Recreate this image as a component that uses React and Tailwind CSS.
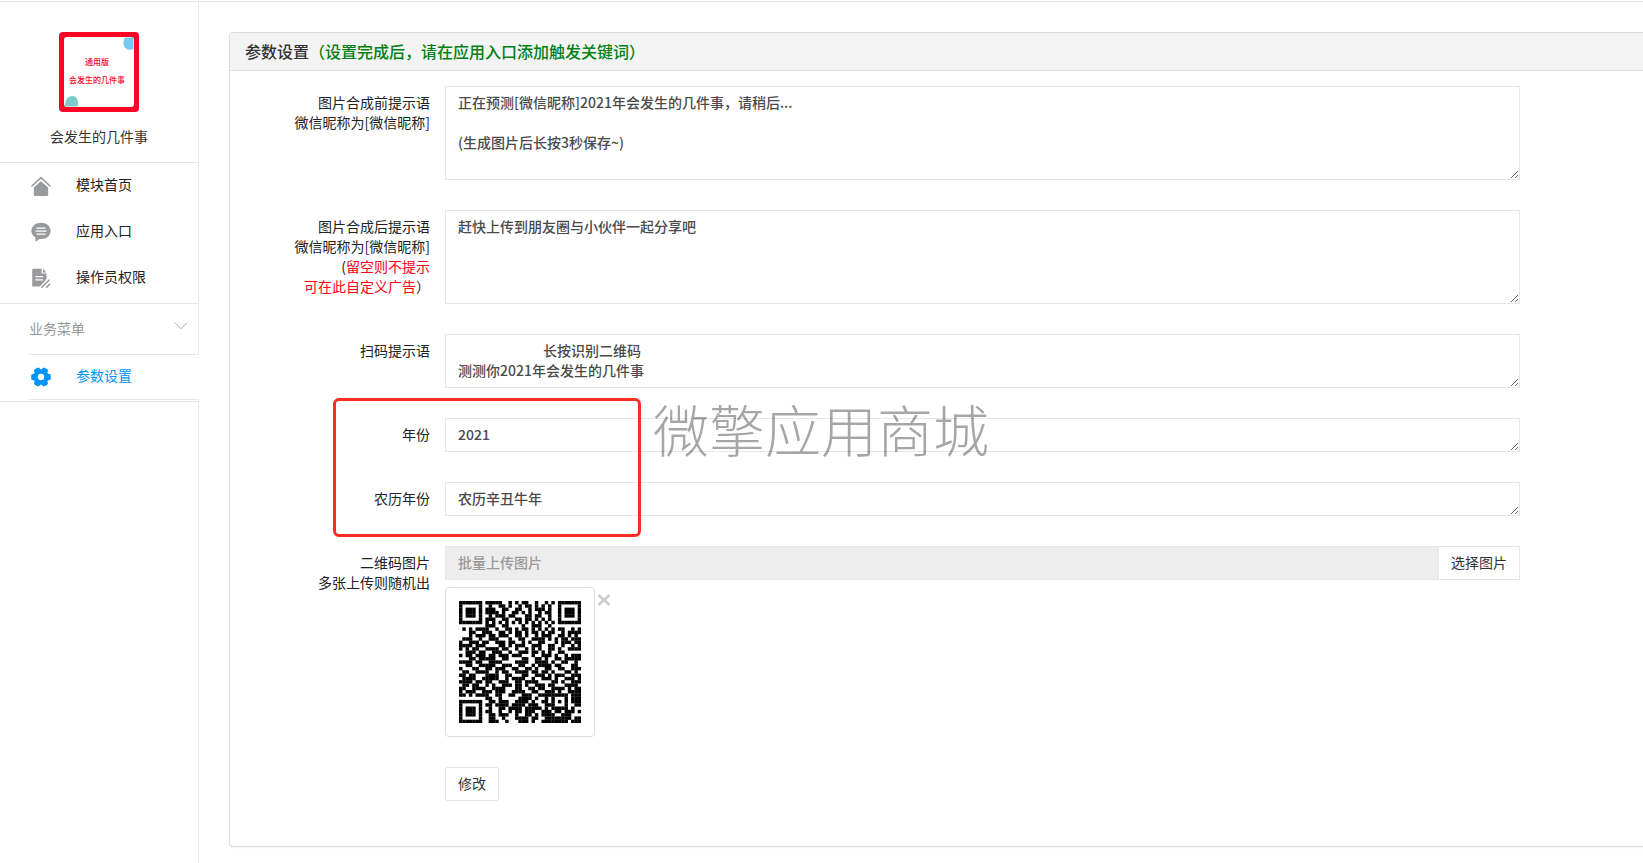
import React, { useState } from "react";
import clsx from "clsx";

const menus = [
  { title: "模块首页", icon: HomeIcon },
  { title: "应用入口", icon: ChatIcon },
  { title: "操作员权限", icon: DocIcon },
];

const qrRows = [
  "#######.#####..#.#.##..#..#.#.#######",
  "#.....#..#..##.#..#.##.#.#.#..#.....#",
  "#.###.#.###..##..##..#.###.#..#.###.#",
  "#.###.#.####.#..##.#.#..#.##..#.###.#",
  "#.###.#..#.###.##...##.##..#..#.###.#",
  "#.....#.###..##..##.##.#.#.#..#.....#",
  "#######.#.#.#.#.#.#.#.#.#.#.#.#######",
  "........###..##....#..###..#.........",
  ".#.#.####..#..##.#.##.#.#.#.#.##..#.#",
  "...##..###..##.#.##.#.##.#.##..#.####",
  "...#.###.##.###..##.#..#.###..##.#.#.",
  ".###..#..###...#..##..####.#.#.##.###",
  "#..###.##..###.##..#.#..##...#.###.##",
  "####.###....##.#.###..###..##..#..#.#",
  "#.#.##..####.##..#..#.#.#..##.#..####",
  "..###.##..###..#..###.##.#.#..##.....",
  "#.##.###.##.###.###...#..###.#..#.###",
  "...##.#####..##....##..##.#..##.#####",
  "####.##..####....####..####.#..##..#.",
  "..##..#####..###..##..#.####.##...##.",
  "#...##..##.###..##..##.#..##..##..###",
  ".##..####..#.##..####.##.##.#...##.#.",
  "##.##...####..##...##..###.#.###..###",
  ".####..#####..#.####..#..###.#..###.#",
  "####.##.##..###..##.####....##.#..###",
  ".##.##..#.#..###.##.#..###.##...####.",
  "##..####..####...##..##.##..####.#.##",
  "#.###..###.###..####..##..###.#..####",
  "##.#.####..##..##..###..#########.###",
  "........##..#.....####.#..#.#...#.###",
  "#######..##.###..####.#..##.#.#.#.###",
  "#.....#.##.####.####.###..###...#..##",
  "#.###.#..#..##.####.#####.#.#####.#..",
  "#.###.#.##..#..#.##.###..###.##.###.#",
  "#.###.#..##.###..#..##.#.####..###...",
  "#.....#..##..#...####.##..########.##",
  "#######..###..#...###.#..########.###",
];

function HomeIcon({ className }) {
  return (
    <svg viewBox="0 0 20 20" className={className} fill="currentColor">
      <path
        d="M1 10 L10 1.6 L19 10"
        fill="none"
        stroke="currentColor"
        strokeWidth="1.6"
        strokeLinecap="round"
        strokeLinejoin="round"
      />
      <path d="M10 5.2 L17.2 11.4 V18.4 Q17.2 20 15.6 20 H4.4 Q2.8 20 2.8 18.4 V11.4 Z" />
    </svg>
  );
}

function ChatIcon({ className }) {
  return (
    <svg viewBox="0 0 20 20" className={className}>
      <path
        d="M10 .8 C15.4 .8 19.6 4.3 19.6 9 C19.6 13.7 15.4 17 10.4 17 L8.6 17 L4.4 19.8 L4.5 15.6 C1.9 14.2 .4 11.8 .4 9 C.4 4.3 4.6 .8 10 .8 Z"
        fill="currentColor"
      />
      <path
        d="M6 6.2 H14 M5 9.2 H15 M6 12.2 H14"
        stroke="#fff"
        strokeWidth="1.2"
        strokeLinecap="round"
      />
    </svg>
  );
}

function DocIcon({ className }) {
  return (
    <svg viewBox="0 0 20 20" className={className}>
      <path
        d="M2.4 .8 H10.6 V5.6 H15.4 V11.2 L9 18.6 H2.4 Q1.2 18.6 1.2 17.4 V2 Q1.2 .8 2.4 .8 Z M12 .8 L15.4 4.4 H12 Z"
        fill="currentColor"
      />
      <path d="M4.4 8.6 H12 M4.4 11.8 H12" stroke="#fff" strokeWidth="1.3" />
      <path
        d="M11 19.2 L18 12.2 M15.6 19.2 L18.4 16.4"
        stroke="currentColor"
        strokeWidth="1.6"
        strokeLinecap="round"
      />
    </svg>
  );
}

function GearIcon({ className }) {
  const angles = [30, 90, 150, 210, 270, 330];
  return (
    <svg viewBox="0 0 20 20" className={className} fill="currentColor">
      <circle cx="10" cy="10" r="7.8" />
      {angles.map((a) => (
        <rect
          key={a}
          x="6.8"
          y=".2"
          width="6.4"
          height="6"
          rx="2"
          transform={`rotate(${a} 10 10)`}
        />
      ))}
      <circle cx="10" cy="10" r="3.2" fill="#fff" />
    </svg>
  );
}

const AppLogo = () => (
  <svg viewBox="0 0 80 80" className="w-20 h-20" role="img" aria-label="logo">
    <rect width="80" height="80" rx="4" fill="#f90626" />
    <rect x="5" y="5" width="70" height="70" rx="3" fill="#fff" />
    <path d="M66 5.5 H74.5 V17 C69 19.5 64 16 64.5 10 Q64.8 7 66 5.5 Z" fill="#73cbf2" />
    <path d="M6 74.5 C6 68 9 64 13.5 64 C18 64 20 69 18.5 74.5 Z" fill="#7bcbc8" />
    <text x="38" y="33" textAnchor="middle" fontSize="8" fontWeight="500" fill="#f90626">
      通用版
    </text>
    <text x="38" y="51" textAnchor="middle" fontSize="8" fontWeight="500" fill="#f90626">
      会发生的几件事
    </text>
  </svg>
);

const QrCode = () => (
  <svg viewBox="0 0 37 37" className="w-[122px] h-[122px]">
    {qrRows.map((row, y) =>
      row
        .split("")
        .map((c, x) =>
          c === "#" ? <rect key={`${x}-${y}`} x={x} y={y} width="1.05" height="1.05" /> : null
        )
    )}
  </svg>
);

const MenuItem = ({ title, icon: Icon, active }) => (
  <a
    href="#"
    className={clsx(
      "flex items-center pl-[31px] gap-[25px]",
      active ? "h-11 text-[#0095f6]" : "h-[46px] text-[#222]"
    )}
  >
    <Icon className={clsx("w-5 h-5", !active && "text-[#999a9c]")} />
    <span className="pb-1">{title}</span>
  </a>
);

const FormRow = ({ id, label, children }) => (
  <div className="flex gap-[15px]">
    <label htmlFor={id} className="w-[185px] shrink-0 pt-1.5 text-right text-[#222]">
      {label}
    </label>
    <div className="flex-1 min-w-0">{children}</div>
  </div>
);

const TextArea = ({ id, rows, value, onChange }) => (
  <textarea
    id={id}
    rows={rows}
    value={value}
    onChange={(e) => onChange(id, e.target.value)}
    className="block w-full px-3 pt-[5px] pb-[7px] border border-[#e7e7eb] bg-white font-medium text-[#4a4a4a] resize overflow-hidden outline-none"
  />
);

const App = () => {
  const [form, setForm] = useState({
    before: "正在预测[微信昵称]2021年会发生的几件事，请稍后...\n\n(生成图片后长按3秒保存~)",
    after: "赶快上传到朋友圈与小伙伴一起分享吧",
    scan: "                           长按识别二维码\n测测你2021年会发生的几件事",
    year: "2021",
    lunar: "农历辛丑牛年",
  });

  const updateField = (id, value) => {
    setForm((prev) => ({ ...prev, [id]: value }));
  };

  return (
    <div className="min-h-screen flex flex-col pt-px bg-white overflow-x-hidden text-sm leading-5 font-['Noto_Sans_CJK_SC',sans-serif]">
      <div className="flex flex-1 border-t border-[#e7e7eb]">
        <aside className="w-[199px] shrink-0 flex flex-col">
          <div className="flex flex-col items-center gap-3.5 pt-[30px] pb-4 border-r border-b border-[#e7e7eb] text-[#333]">
            <AppLogo />
            <h2>会发生的几件事</h2>
          </div>
          <nav className="pb-0.5 border-r border-b border-[#e7e7eb]">
            {menus.map((menu) => (
              <MenuItem key={menu.title} {...menu} />
            ))}
          </nav>
          <div className="pl-[29px] border-r border-[#e7e7eb]">
            <button
              type="button"
              className="flex w-full items-center justify-between h-[51px] pr-2.5 pb-0.5 border-b border-[#e7e7eb] text-[#999]"
            >
              业务菜单
              <svg viewBox="0 0 14 8" className="w-3.5 h-2 mb-1" fill="none" stroke="#aaa">
                <path d="M1 .8 L7 6.8 L13 .8" />
              </svg>
            </button>
          </div>
          <MenuItem title="参数设置" icon={GearIcon} active />
          <div className="ml-[29px] mb-px border-b border-[#e7e7eb]" />
          <div className="flex-1 border-t border-r border-[#e7e7eb]" />
        </aside>

        <main className="flex-1 min-w-0 pl-[30px] pt-[30px] pb-4">
          <section className="border border-r-0 border-[#ddd] rounded-l shadow-xs">
            <h1 className="px-[15px] pt-2 pb-[9px] border-b border-[#ddd] bg-[#f4f4f4] rounded-tl text-base leading-5 font-medium text-[#333]">
              参数设置
              <span className="text-[#008015]">（设置完成后，请在应用入口添加触发关键词）</span>
            </h1>
            <form
              className="flex flex-col gap-[30px] pl-[15px] pr-[123px] pt-[15px] pb-[45px]"
              onSubmit={(e) => e.preventDefault()}
            >
              <FormRow
                id="before"
                label={
                  <>
                    图片合成前提示语
                    <br />
                    微信昵称为[微信昵称]
                  </>
                }
              >
                <TextArea id="before" rows={4} value={form.before} onChange={updateField} />
              </FormRow>
              <FormRow
                id="after"
                label={
                  <>
                    图片合成后提示语
                    <br />
                    微信昵称为[微信昵称]
                    <br />(<span className="text-[#ff0019]">留空则不提示</span>
                    <br />
                    <span className="text-[#ff0019]">可在此自定义广告</span>）
                  </>
                }
              >
                <TextArea id="after" rows={4} value={form.after} onChange={updateField} />
              </FormRow>
              <FormRow id="scan" label="扫码提示语">
                <TextArea id="scan" rows={2} value={form.scan} onChange={updateField} />
              </FormRow>

              <div className="relative flex flex-col gap-[30px]">
                <FormRow id="year" label="年份">
                  <TextArea id="year" rows={1} value={form.year} onChange={updateField} />
                </FormRow>
                <FormRow id="lunar" label="农历年份">
                  <TextArea id="lunar" rows={1} value={form.lunar} onChange={updateField} />
                </FormRow>
                <div className="absolute -top-5 -bottom-[21px] left-[88px] w-[308px] border-3 border-[#ff2d21] rounded-md pointer-events-none" />
                <div className="absolute -top-[18px] left-[408px] text-[56px] leading-[56px] font-light text-black/35 whitespace-nowrap pointer-events-none">
                  微擎应用商城
                </div>
              </div>

              <FormRow
                id="qrcode"
                label={
                  <>
                    二维码图片
                    <br />
                    多张上传则随机出
                  </>
                }
              >
                <div className="flex">
                  <input
                    id="qrcode"
                    type="text"
                    readOnly
                    placeholder="批量上传图片"
                    className="flex-1 min-w-0 h-[34px] px-3 pb-0.5 border border-r-0 border-[#e7e7eb] bg-[#ededed] font-medium placeholder:text-[#999] outline-none"
                  />
                  <button
                    type="button"
                    className="h-[34px] px-3 pb-0.5 border border-[#e7e7eb] bg-white text-[#333]"
                  >
                    选择图片
                  </button>
                </div>
                <div className="relative w-[150px] h-[150px] mt-[7px] flex items-center justify-center border border-[#ddd] rounded">
                  <QrCode />
                  <button
                    type="button"
                    aria-label="删除"
                    className="absolute top-[5px] left-[151px] text-[#ccc]"
                  >
                    <svg viewBox="0 0 14 14" className="w-3.5 h-3.5" stroke="currentColor">
                      <path d="M1.5 2 L12.5 12 M12.5 2 L1.5 12" strokeWidth="2.4" />
                    </svg>
                  </button>
                </div>
              </FormRow>

              <div className="pl-[200px]">
                <button
                  type="submit"
                  className="h-[34px] px-3 pb-0.5 border border-[#e7e7eb] rounded-xs bg-white text-[#333]"
                >
                  修改
                </button>
              </div>
            </form>
          </section>
        </main>
      </div>
    </div>
  );
};

export default App;
